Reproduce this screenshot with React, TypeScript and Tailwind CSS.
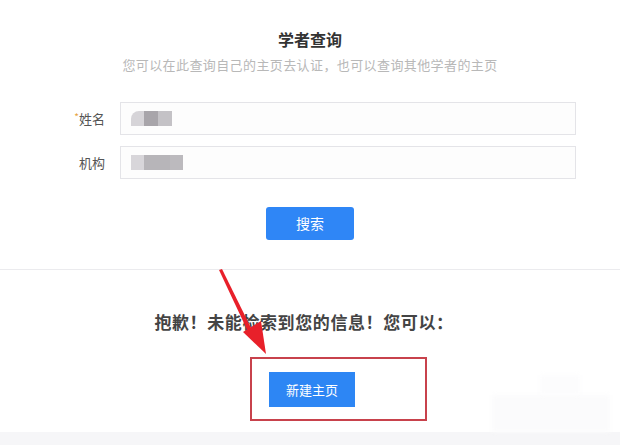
import React from "react";

const font = { fontFamily: '"Noto Sans CJK SC", "Noto Sans", sans-serif' };

const BlurBox: React.FC<{ widths: string[] }> = ({ widths }) => (
  <div className="flex items-center h-[15px]">
    {widths.map((c, i) => (
      <div key={i} className={`h-[15px] w-[13px] ${c}`} />
    ))}
  </div>
);

const App: React.FC = () => {
  return (
    <div
      className="relative w-[620px] h-[445px] overflow-hidden bg-white"
      style={font}
    >
      <div className="flex flex-col items-center pt-[28px]">
        <h1 className="text-[16px] leading-[22px] font-bold text-[#333]">学者查询</h1>
        <p className="mt-[6px] text-[13px] leading-[18px] tracking-[0.4px] text-[#b8b8b8]">
          您可以在此查询自己的主页去认证，也可以查询其他学者的主页
        </p>
      </div>

      <div className="mt-[28px] flex flex-col gap-[11px]">
        <div className="flex items-center">
          <label className="w-[106px] text-right pr-[1px] text-[13px] text-[#555]">
            <span className="text-[#e6a23c] text-[10px] align-top">*</span>姓名
          </label>
          <div className="ml-[14px] w-[456px] h-[33px] border border-[#e4e4e8] bg-[#fdfdfd] flex items-center pl-[10px]">
            <div className="flex items-center">
              <div className="h-[15px] w-[13px] bg-[#d6d4d8] rounded-tl-[8px]" />
              <div className="h-[15px] w-[14px] bg-[#a8a5aa]" />
              <div className="h-[15px] w-[14px] bg-[#c4c2c6]" />
            </div>
          </div>
        </div>
        <div className="flex items-center">
          <label className="w-[106px] text-right pr-[1px] text-[13px] text-[#555]">机构</label>
          <div className="ml-[14px] w-[456px] h-[33px] border border-[#e4e4e8] bg-[#fdfdfd] flex items-center pl-[10px]">
            <BlurBox widths={["bg-[#d8d6da]", "bg-[#b7b5b9]", "bg-[#b7b5b9]", "bg-[#bcbabe]"]} />
          </div>
        </div>
      </div>

      <div className="flex justify-center mt-[28px]">
        <button className="w-[88px] h-[33px] rounded-[3px] bg-[#2f86f6] text-white text-[14px]">
          搜索
        </button>
      </div>

      <div className="mt-[29px] border-t border-[#ebebee]" />

      <p className="mt-[42px] pr-[12px] text-center text-[17px] leading-[20px] font-bold tracking-[0.6px] text-[#444]">
        抱歉！未能检索到您的信息！您可以：
      </p>

      <div className="flex justify-center mt-[40px] pl-[4px]">
        <button className="w-[86px] h-[35px] bg-[#2d86f4] text-white text-[13px]">
          新建主页
        </button>
      </div>

      <div className="absolute left-0 right-0 bottom-0 h-[13px] bg-[#f6f6f8]" />

      {/* faint blurred watermark */}
      <div className="absolute left-[492px] top-[395px] w-[118px] h-[37px] bg-[#fbfbfc] blur-[2px]" />
      <div className="absolute left-[540px] top-[375px] w-[40px] h-[20px] bg-[#fcfcfd] blur-[2px]" />

      {/* annotation: red box */}
      <div className="absolute left-[250px] top-[357px] w-[177px] h-[64px] border-2 border-[#c8424c]" />

      {/* annotation: red arrow */}
      <svg className="absolute left-0 top-0" width="620" height="445">
        <polygon points="219,270 222,269 254,334 250,336" fill="#e8202a" />
        <polygon points="243,332 266,354 261,321" fill="#e8202a" />
      </svg>
    </div>
  );
};

export default App;
